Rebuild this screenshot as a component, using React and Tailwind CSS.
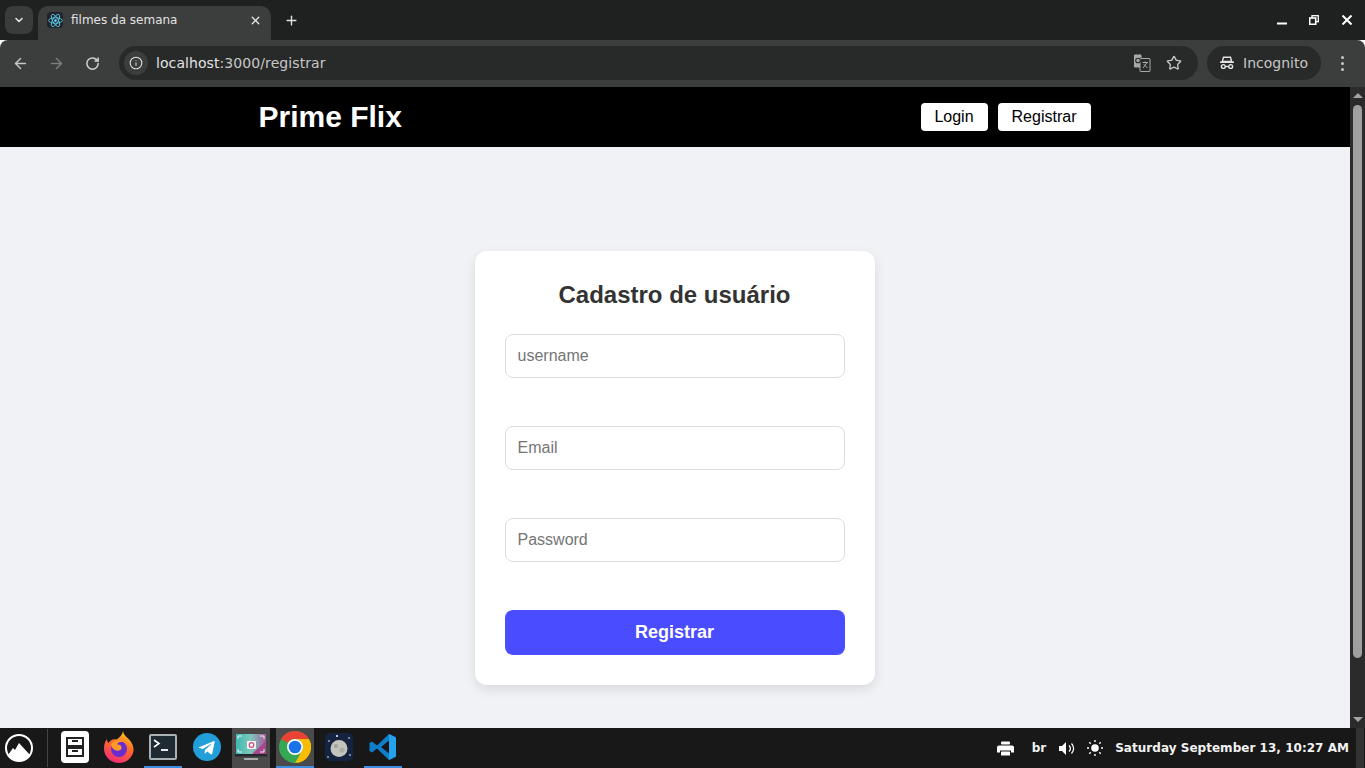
import { ArrowLeft, ArrowRight, RotateCw, Info, Star, X, Plus, ChevronDown } from 'lucide-react'

function ReactIcon() {
  return (
    <div className="flex h-4 w-4 items-center justify-center rounded-sm bg-[#20232a]">
      <svg width="15" height="15" viewBox="-12 -12 24 24" fill="none" stroke="#61dafb" strokeWidth="1.3">
        <circle r="2.2" fill="#61dafb" stroke="none" />
        <ellipse rx="11" ry="4.4" />
        <ellipse rx="11" ry="4.4" transform="rotate(60)" />
        <ellipse rx="11" ry="4.4" transform="rotate(120)" />
      </svg>
    </div>
  )
}

function TabStrip() {
  return (
    <div className="flex h-[40px] items-end bg-[#1f2121] font-['DejaVu_Sans',sans-serif]">
      <div className="mb-[6px] ml-[5px] flex h-[28px] w-[28px] items-center justify-center rounded-lg bg-[#3a3b3b]">
        <ChevronDown size={12} strokeWidth={3.2} className="text-[#e3e3e3]" />
      </div>
      <div className="ml-[5px] flex h-[34px] w-[233px] items-center rounded-t-[10px] bg-[#3c3d3d] pb-[6px] pl-[9px] pr-[9px]">
        <ReactIcon />
        <span className="ml-[8px] flex-1 text-[12px] text-[#e3e3e3]">filmes da semana</span>
        <X size={13} strokeWidth={2.5} className="text-[#e3e3e3]" />
      </div>
      <Plus size={15} strokeWidth={2.2} className="mb-[12px] ml-[13px] text-[#e3e3e3]" />
      <div className="mb-[15px] ml-auto flex items-center pr-[13px]">
        <svg width="10" height="10" viewBox="0 0 10 10"><rect x="0" y="7.500" width="10" height="2" fill="#fff" /></svg>
        <svg width="10" height="10" viewBox="0 0 10 10" fill="none" stroke="#fff" strokeWidth="1.300" className="ml-[22px]">
          <rect x="3" y="0.700" width="6.300" height="6" />
          <rect x="0.700" y="3" width="6" height="6.300" fill="#1f2121" strokeWidth="1.600" />
        </svg>
        <svg width="10" height="10" viewBox="0 0 10 10" stroke="#fff" strokeWidth="2" className="ml-[23px]">
          <path d="M0.500 0.500l9 9M9.500 0.500l-9 9" />
        </svg>
      </div>
    </div>
  )
}

function Toolbar() {
  return (
    <div className="flex h-[47px] items-center rounded-t-lg bg-[#3c3d3d] pb-px font-['DejaVu_Sans',sans-serif]">
      <ArrowLeft size={17} strokeWidth={2} className="ml-[12px] text-[#c7c7c7]" />
      <ArrowRight size={17} strokeWidth={2} className="ml-[19px] text-[#7d7e7e]" />
      <RotateCw size={15} strokeWidth={2.4} className="ml-[20px] text-[#d0d0d0]" />
      <div className="ml-[19px] flex h-[34px] w-[1079px] items-center rounded-full bg-[#282929] pl-[5px] pr-[16px]">
        <div className="flex h-[24px] w-[24px] items-center justify-center rounded-full bg-[#3c3d3d]">
          <Info size={14} strokeWidth={1.8} className="text-[#e3e3e3]" />
        </div>
        <span className="ml-[8px] flex-1 text-[14px] tracking-[0.08px] text-[#c7c7c7]">
          <span className="text-[#e3e3e3]">localhost</span>:3000/registrar
        </span>
        <svg width="18" height="18" viewBox="0 0 18 18" className="mr-[15px]">
          <path d="M1 1.500a1 1 0 0 1 1-1h6l1 3h-2l3 10H2a1 1 0 0 1-1-1z" fill="#a8a9a9" />
          <rect x="7" y="4.500" width="10" height="13" rx="0.500" fill="#282929" stroke="#a8a9a9" strokeWidth="1" />
          <circle cx="5" cy="6.500" r="2.300" fill="none" stroke="#282929" strokeWidth="1.100" />
          <path d="M9.500 8.500h5.500M12 7.500v1M10 14l4-5.500M11 10.500l3.500 3.500" stroke="#a8a9a9" strokeWidth="1" fill="none" />
        </svg>
        <Star size={16} strokeWidth={2} className="text-[#c7c7c7]" />
      </div>
      <div className="ml-[9px] flex h-[34px] w-[114px] items-center rounded-full bg-[#282929] pl-[12px]">
        <svg width="16" height="16" viewBox="0 0 16 16" fill="none" stroke="#e3e3e3" strokeWidth="1.400">
          <path d="M4.500 2.200h7l1.200 4.300H3.300z" />
          <path d="M1 7.200h14" strokeWidth="1.600" />
          <circle cx="4.300" cy="11.500" r="1.900" />
          <circle cx="11.700" cy="11.500" r="1.900" />
          <path d="M6.200 11.500h3.600" />
        </svg>
        <span className="ml-[8px] text-[14px] text-[#c7c7c7]">Incognito</span>
      </div>
      <div className="ml-[20px] flex flex-col gap-[3px]">
        <div className="h-[3px] w-[3px] rounded-full bg-[#c7c7c7]" />
        <div className="h-[3px] w-[3px] rounded-full bg-[#c7c7c7]" />
        <div className="h-[3px] w-[3px] rounded-full bg-[#c7c7c7]" />
      </div>
    </div>
  )
}

function Scrollbar() {
  return (
    <div className="flex w-[15px] flex-col items-center bg-[#2b2b2b] pt-[6px]">
      <div className="h-0 w-0 border-x-[5px] border-b-[5px] border-x-transparent border-b-[#a3a3a3]" />
      <div className="mt-[7px] h-[553px] w-[9px] rounded-full bg-[#9f9f9f]" />
      <div className="mt-auto mb-[6px] h-0 w-0 border-x-[5px] border-t-[5px] border-x-transparent border-t-[#a3a3a3]" />
    </div>
  )
}

function Field({ placeholder, type = 'text' }) {
  return (
    <input
      type={type}
      placeholder={placeholder}
      className="mb-[48px] h-[44px] w-full rounded-lg border border-[#dddddd] bg-white px-3 text-[16px] text-[#333] outline-none placeholder:text-[#757575]"
    />
  )
}

function Page() {
  return (
    <div className="flex min-w-0 flex-1 flex-col bg-[#f0f2f5] font-['Liberation_Sans',sans-serif]">
      <header className="flex h-[60px] items-center bg-black pl-[258.5px] pr-[259px]">
        <h1 className="mb-[2px] text-[30px] font-bold text-white">Prime Flix</h1>
        <div className="ml-auto flex gap-[10px]">
          <button className="h-[28px] w-[67px] rounded bg-white pr-px text-[16px] text-black">Login</button>
          <button className="h-[28px] w-[93px] rounded bg-white pr-px text-[16px] text-black">Registrar</button>
        </div>
      </header>
      <main className="flex flex-1 items-start justify-center pr-px pt-[104px]">
        <form className="w-[400px] rounded-xl bg-white p-[30px] shadow-[0_4px_12px_rgba(0,0,0,0.1)]">
          <h2 className="mb-[25px] text-center text-[24px] font-bold leading-[28px] text-[#333333]">Cadastro de usuário</h2>
          <Field placeholder="username" />
          <Field placeholder="Email" type="email" />
          <Field placeholder="Password" type="password" />
          <button type="button" className="h-[45px] w-full rounded-lg bg-[#4a4dff] text-[18px] font-bold text-white">Registrar</button>
        </form>
      </main>
    </div>
  )
}

function Drawer() {
  return (
    <div className="flex h-[10px] w-[18px] items-start justify-center border-2 border-[#222]">
      <div className="mt-px h-[2px] w-[6px] bg-[#222]" />
    </div>
  )
}

function Slot({ active, running, children }) {
  return (
    <div className={`flex h-[40px] w-[38px] items-center justify-center border-b-2 ${running ? 'border-[#3d8ee0]' : 'border-transparent'} ${active ? 'bg-[#4a4a4a]' : ''}`}>
      {children}
    </div>
  )
}

function Dock() {
  return (
    <div className="flex items-center gap-[6px]">
      <Slot>
        <div className="flex h-[32px] w-[28px] flex-col items-center justify-center rounded-[4px] bg-white">
          <Drawer />
          <Drawer />
        </div>
      </Slot>
      <Slot>
        <svg width="30" height="32" viewBox="0 0 30 32">
          <defs>
            <linearGradient id="fx" x1="0.700" y1="0" x2="0.300" y2="1">
              <stop offset="0" stopColor="#ffc81f" />
              <stop offset="0.450" stopColor="#ff6a2a" />
              <stop offset="1" stopColor="#ee2a7b" />
            </linearGradient>
          </defs>
          <path d="M19 0c.5 4 3.500 5.500 6.500 9 3.500 4 5 9 3.500 13-2 6-7.500 10-14 10C6.500 32 0 25.500 0 17.500 0 13.500 1 10.500 3 8c0 2 .5 3 1.500 4 2-3 5-4.500 8-3.500C16 6.500 18.500 3.500 19 0z" fill="url(#fx)" />
          <circle cx="15" cy="18" r="8" fill="#6a2bd0" />
          <path d="M7 13c3-4 9-5 13-2-3-.5-6 0-7 2.500 3-.5 5 1.500 4.500 4-1.500 3-6 3-9-.5-1-1.500-1.500-2.500-1.500-4z" fill="#ff9a24" />
        </svg>
      </Slot>
      <Slot running>
        <svg width="28" height="26" viewBox="0 0 28 26">
          <rect x="1" y="1" width="26" height="24" rx="1" fill="#1e2b33" stroke="#a9b1b5" strokeWidth="2" />
          <path d="M5 6l5 3.500-5 3.500" fill="none" stroke="#fff" strokeWidth="1.600" />
          <path d="M12 16h7" stroke="#fff" strokeWidth="1.800" />
        </svg>
      </Slot>
      <Slot>
        <svg width="28" height="28" viewBox="0 0 28 28">
          <circle cx="14" cy="14" r="14" fill="#229ed9" />
          <path d="M6 14.200l14.500-6c.7-.3 1.300.2 1.100 1l-2.400 11.500c-.2.800-.7 1-1.400.6l-3.600-2.700-1.800 1.700c-.2.2-.4.4-.8.4l.3-3.700 6.700-6c.3-.3 0-.4-.4-.2l-8.300 5.200-3.500-1.100c-.8-.2-.8-.8.2-1.200z" fill="#fff" />
        </svg>
      </Slot>
      <Slot active>
        <svg width="32" height="28" viewBox="0 0 32 28">
          <defs>
            <linearGradient id="sc" x1="0" y1="0" x2="1" y2="0">
              <stop offset="0" stopColor="#3fb8b0" />
              <stop offset="0.500" stopColor="#7fc9bc" />
              <stop offset="1" stopColor="#a45a9a" />
            </linearGradient>
          </defs>
          <rect x="1" y="1" width="30" height="20" fill="url(#sc)" />
          <path d="M17 21L31 8v13z" fill="#a5468f" />
          <path d="M3 6V3h4M29 6V3h-4M3 16v3h4M29 16v3h-4" fill="none" stroke="#e8f3f3" strokeWidth="1" />
          <rect x="0" y="21" width="32" height="2.500" fill="#26282a" />
          <rect x="9" y="25" width="14" height="2" fill="#aaa" />
          <rect x="12" y="8" width="9" height="8" rx="1" fill="#f4f4f4" />
          <circle cx="16.500" cy="12" r="2.300" fill="none" stroke="#c8507e" strokeWidth="1.200" />
        </svg>
      </Slot>
      <Slot active running>
        <svg width="32" height="32" viewBox="0 0 32 32">
          <circle cx="16" cy="16" r="16" fill="#34a853" />
          <path d="M16 0A16 16 0 0 1 29.860 8H16a8 8 0 0 0-6.930 4L2.140 8A16 16 0 0 1 16 0z" fill="#ea4335" />
          <path d="M29.860 8A16 16 0 0 1 16 32l6.930-12A8 8 0 0 0 16 8z" fill="#fbbc04" />
          <circle cx="16" cy="16" r="8" fill="#fff" />
          <circle cx="16" cy="16" r="6.300" fill="#1a73e8" />
        </svg>
      </Slot>
      <Slot>
        <svg width="28" height="28" viewBox="0 0 28 28">
          <rect width="28" height="28" rx="5" fill="#14233f" />
          <circle cx="14" cy="15.500" r="8.500" fill="#c4c4bf" />
          <circle cx="11" cy="13" r="2.200" fill="#a5a5a0" />
          <circle cx="17" cy="17" r="2.600" fill="#adada8" />
          <circle cx="12" cy="3" r="1" fill="#fff" />
          <circle cx="24" cy="5" r="0.800" fill="#fff" />
          <circle cx="4" cy="8" r="0.800" fill="#fff" />
          <circle cx="25" cy="22" r="0.800" fill="#fff" />
          <circle cx="3" cy="24" r="0.800" fill="#fff" />
        </svg>
      </Slot>
      <Slot running>
        <svg width="28" height="28" viewBox="0 0 28 28">
          <path d="M20 1L8 12.500 3 8.500.500 10v8L3 19.500l5-4L20 27l7-3.400V4.400z" fill="#0f7fc9" />
          <path d="M20 7.500L12 14l8 6.500z" fill="#181818" />
          <path d="M20 1l7 3.400v19.200L20 27z" fill="#24a0ed" />
        </svg>
      </Slot>
    </div>
  )
}

function Taskbar() {
  return (
    <div className="flex h-[40px] items-center bg-[#181818] font-['DejaVu_Sans',sans-serif]">
      <div className="ml-[5px] flex h-[28px] w-[28px] items-center justify-center">
        <svg width="28" height="28" viewBox="0 0 28 28">
          <circle cx="14" cy="14" r="13" fill="#181818" stroke="#fff" strokeWidth="2" />
          <path d="M3 21l5-7 2 2 4-7 11 12A13 13 0 0 1 3 21z" fill="#fff" />
        </svg>
      </div>
      <div className="ml-[14px] mr-[8px] h-[38px] w-px bg-[#444]" />
      <Dock />
      <div className="ml-auto flex items-center text-[12px] font-bold text-[#f2f2f2]">
        <svg width="17" height="15" viewBox="0 0 17 15" fill="#fff">
          <rect x="4" y="0.500" width="9" height="3" rx="1" />
          <path d="M2 4.500h13a2 2 0 0 1 2 2v5h-3v-2H3v2H0v-5a2 2 0 0 1 2-2z" />
          <rect x="4" y="10.500" width="9" height="4" rx="0.500" />
        </svg>
        <span className="ml-[18px]">br</span>
        <svg width="17" height="15" viewBox="0 0 17 15" fill="none" stroke="#fff" className="ml-[12px]">
          <path d="M1 5h3l4-4v13l-4-4H1z" fill="#fff" stroke="none" />
          <path d="M11 4.500a4 4 0 0 1 0 6M13.500 2.500a7 7 0 0 1 0 10" strokeWidth="1.300" />
        </svg>
        <svg width="16" height="16" viewBox="0 0 16 16" stroke="#fff" strokeWidth="1.400" className="ml-[12px]">
          <circle cx="8" cy="8" r="3.800" fill="#fff" stroke="none" />
          <path d="M8 0v2M8 14v2M0 8h2M14 8h2M2.300 2.300l1.400 1.400M12.300 12.300l1.400 1.400M2.300 13.700l1.400-1.400M12.300 3.700l1.400-1.400" />
        </svg>
        <span className="ml-[12px] tracking-[0.03px]">Saturday September 13, 10:27 AM</span>
      </div>
      <div className="ml-[7px] mr-px h-full w-[8px] bg-[#333333]" />
    </div>
  )
}

export default function App() {
  return (
    <div className="flex h-[768px] w-[1365px] flex-col overflow-hidden">
      <TabStrip />
      <Toolbar />
      <div className="flex min-h-0 flex-1">
        <Page />
        <Scrollbar />
      </div>
      <Taskbar />
    </div>
  )
}
